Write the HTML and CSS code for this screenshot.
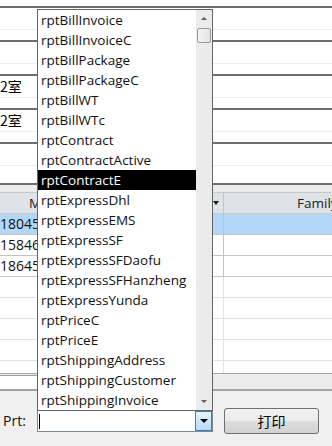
FILE: index.html
```html
<!DOCTYPE html>
<html>
<head>
<meta charset="utf-8">
<link rel="stylesheet" href="styles.css">
</head>
<body>
<div class="app">
  <div class="form">
    <div class="field"></div>
    <div class="field"></div>
    <div class="field"><span class="ftext">2室</span></div>
    <div class="field"><span class="ftext">2室</span></div>
    <div class="field last"></div>
  </div>
  <div class="grid">
    <div class="ghead">
      <div class="gcol c1"><span class="htext clip">M</span><span class="filter"></span></div>
      <div class="gcol c2"><span class="htext fam">Family</span></div>
    </div>
    <div class="gbody">
      <div class="grow sel"><div class="gcell c1"><span class="num">18045</span></div><div class="gcell c2"></div></div>
      <div class="grow"><div class="gcell c1"><span class="num">15846</span></div><div class="gcell c2"></div></div>
      <div class="grow"><div class="gcell c1"><span class="num">18645</span></div><div class="gcell c2"></div></div>
      <div class="grow empty"><div class="gcell c1"></div><div class="gcell c2"></div></div>
      <div class="grow empty"><div class="gcell c1"></div><div class="gcell c2"></div></div>
      <div class="grow empty"><div class="gcell c1"></div><div class="gcell c2"></div></div>
      <div class="grow empty"><div class="gcell c1"></div><div class="gcell c2"></div></div>
      <div class="grow empty"><div class="gcell c1"></div><div class="gcell c2"></div></div>
    </div>
    <div class="gfoot"><div class="hbox"></div></div>
  </div>
  <div class="bottom">
    <label class="prt">Prt:</label>
    <div class="combo">
      <span class="caret"></span>
      <span class="cbtn"><span class="tri-down"></span></span>
    </div>
    <button class="print">打印</button>
  </div>

  <div class="dropdown">
    <ul class="items">
      <li>rptBillInvoice</li>
      <li>rptBillInvoiceC</li>
      <li>rptBillPackage</li>
      <li>rptBillPackageC</li>
      <li>rptBillWT</li>
      <li>rptBillWTc</li>
      <li>rptContract</li>
      <li>rptContractActive</li>
      <li class="hl">rptContractE</li>
      <li>rptExpressDhl</li>
      <li>rptExpressEMS</li>
      <li>rptExpressSF</li>
      <li>rptExpressSFDaofu</li>
      <li>rptExpressSFHanzheng</li>
      <li>rptExpressYunda</li>
      <li>rptPriceC</li>
      <li>rptPriceE</li>
      <li>rptShippingAddress</li>
      <li>rptShippingCustomer</li>
      <li>rptShippingInvoice</li>
    </ul>
    <div class="sbar">
      <div class="sbtn"><span class="sb-up"></span></div>
      <div class="thumb"></div>
      <div class="strack"></div>
      <div class="sbtn"><span class="sb-down"></span></div>
    </div>
  </div>
</div>
</body>
</html>
```

FILE: styles.css
```css
* { box-sizing: border-box; }
html, body {
  margin: 0;
  padding: 0;
  background: #ffffff;
}
body {
  font-family: "Open Sans", "Noto Sans CJK SC", sans-serif;
  font-size: 13.5px;
  color: #111;
}
.app {
  position: relative;
  width: 332px;
  height: 446px;
  overflow: hidden;
}

/* top form */
.form {
  padding-top: 6px;
  background: #fff;
}
.field {
  height: 24px;
  border-top: 2px solid #6e6e6e;
  border-bottom: 1px solid #ececec;
  margin-bottom: 10px;
  line-height: 21px;
  white-space: nowrap;
  overflow: hidden;
}
.field.last { margin-bottom: 17px; }
.ftext {
  font-family: "Noto Sans CJK SC", sans-serif;
  font-size: 14px;
  color: #000;
}

/* grid */
.grid {
  border-top: 2px solid #6e6e6e;
  background: #ececec;
  padding-top: 7px;
}
.ghead {
  display: flex;
  height: 22px;
  border-top: 1px solid #c9c9c9;
  border-bottom: 1px solid #c9c9c9;
  background: #dfe2e7;
}
.gcol {
  display: flex;
  align-items: center;
  height: 20px;
  white-space: nowrap;
  overflow: hidden;
}
.c1 { width: 224px; border-right: 1px solid #c4c4c4; }
.c2 { flex: 1; }
.ghead .c1 { padding-left: 29px; justify-content: space-between; padding-right: 4px; }
.htext { color: #1e1e1e; }
.clip {
  display: inline-block;
  width: 8px;
  overflow: hidden;
}
.fam { padding-left: 73px; }
.filter {
  width: 0;
  height: 0;
  border-left: 3px solid transparent;
  border-right: 3px solid transparent;
  border-top: 4px solid #111;
}
.gbody {
  height: 160px;
  overflow: hidden;
  background: #fff;
  border-bottom: 1px solid #a7a7a7;
}
.grow {
  display: flex;
  height: 21px;
  border-bottom: 1px solid #c3c3c3;
}
.grow.sel { background: #b3d7f8; }
.grow.empty { border-bottom-color: #e3e3e3; }
.grow.empty .c1 { border-right-color: #e3e3e3; }
.gcell {
  height: 20px;
  line-height: 20px;
  white-space: nowrap;
  overflow: hidden;
}
.num { font-size: 14px; }
.gfoot {
  height: 17px;
  padding-top: 1px;
  background: #ececec;
  border-bottom: 2px solid #a4a4a4;
}
.hbox {
  width: 150px;
  height: 15px;
  background: #fff;
  border-top: 1px solid #a0a0a0;
  border-bottom: 1px solid #a0a0a0;
}

/* bottom bar */
.bottom {
  display: flex;
  align-items: flex-start;
  height: 56px;
  padding: 17px 0 0 3px;
  background: #f0f0f0;
}
.prt {
  width: 34px;
  height: 26px;
  line-height: 26px;
  color: #111;
  font-size: 14px;
}
.combo {
  position: relative;
  width: 176px;
  height: 22px;
  margin-top: 2px;
  background: #fff;
  border: 1px solid #7a8a99;
  display: flex;
  justify-content: flex-end;
  align-items: center;
}
.caret {
  position: absolute;
  left: 1px;
  top: 3px;
  width: 1px;
  height: 15px;
  background: #000;
}
.cbtn {
  width: 17px;
  height: 20px;
  border: 1px solid #3c7fb1;
  background: linear-gradient(#e5f4fc, #b6dcf5);
  display: flex;
  align-items: center;
  justify-content: center;
}
.tri-down {
  width: 0;
  height: 0;
  border-left: 4px solid transparent;
  border-right: 4px solid transparent;
  border-top: 4px solid #000;
}
.print {
  margin-left: 11px;
  width: 95px;
  height: 26px;
  border: 1px solid #707070;
  border-radius: 3px;
  background: linear-gradient(#f2f2f2 0%, #ebebeb 50%, #dddddd 51%, #d2d2d2 100%);
  font-family: "Noto Sans CJK SC", sans-serif;
  font-size: 14px;
  color: #000;
  padding: 0;
}

/* dropdown list */
.dropdown {
  position: absolute;
  left: 37px;
  top: 9px;
  width: 176px;
  height: 402px;
  border: 1px solid #646464;
  background: #fff;
  display: flex;
}
.items {
  list-style: none;
  margin: 0;
  padding: 0;
  flex: 1;
}
.items li {
  height: 20px;
  line-height: 20px;
  padding-left: 3px;
  white-space: nowrap;
  overflow: hidden;
  color: #111;
}
.items li.hl {
  background: #000;
  color: #fff;
}
.sbar {
  width: 16px;
  background: #ebebeb;
  display: flex;
  flex-direction: column;
}
.sbtn {
  height: 17px;
  display: flex;
  align-items: center;
  justify-content: center;
}
.sb-up {
  width: 0;
  height: 0;
  border-left: 3px solid transparent;
  border-right: 3px solid transparent;
  border-bottom: 3px solid #606060;
}
.sb-down {
  width: 0;
  height: 0;
  border-left: 3px solid transparent;
  border-right: 3px solid transparent;
  border-top: 3px solid #606060;
}
.thumb {
  margin: 1px 1px 0 1px;
  height: 15px;
  border: 1px solid #9a9a9a;
  border-radius: 2px;
  background: linear-gradient(90deg, #f4f4f4, #e2e2e2);
}
.strack { flex: 1; }
```
